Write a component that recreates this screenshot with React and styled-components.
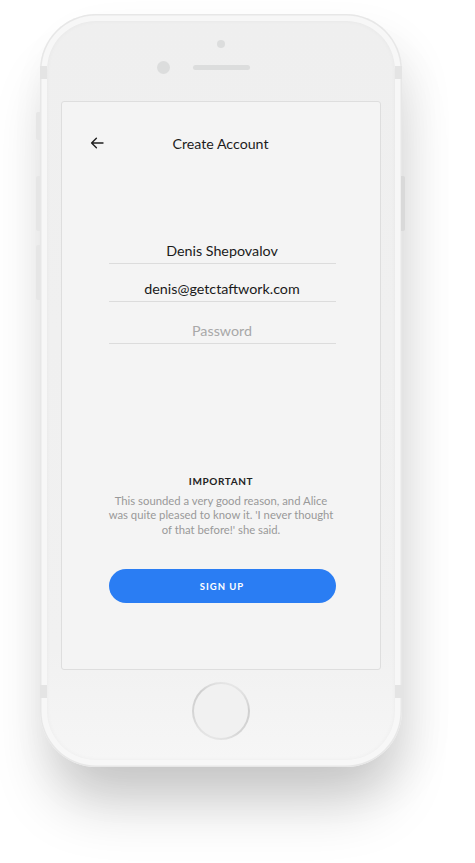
import React from "react";
import styled, { createGlobalStyle } from "styled-components";

const GlobalStyle = createGlobalStyle`
  html, body {
    margin: 0;
    padding: 0;
    background: #ffffff;
  }
  body {
    font-family: Lato, "Open Sans", sans-serif;
    -webkit-font-smoothing: antialiased;
  }
`;

const App = () => {
  return (
    <Stage>
      <GlobalStyle />
      <Phone>
        <SideButton side="left" top={98} length={28} />
        <SideButton side="left" top={162} length={55} />
        <SideButton side="left" top={231} length={55} />
        <SideButton side="right" top={162} length={55} dark />
        <Band side="left" top={52} />
        <Band side="right" top={52} />
        <Band side="left" top={671} />
        <Band side="right" top={671} />
        <Face>
          <TopBezel>
            <Sensor />
            <CameraRow>
              <Camera />
              <Speaker />
            </CameraRow>
          </TopBezel>
          <Screen>
            <Header>
              <BackButton aria-label="Back">
                <svg width="14" height="12" viewBox="0 0 14 12" fill="none">
                  <path
                    d="M13 6H1.6M6.4 1.2L1.6 6l4.8 4.8"
                    stroke="#1f1f1f"
                    strokeWidth="1.4"
                    strokeLinecap="round"
                    strokeLinejoin="round"
                  />
                </svg>
              </BackButton>
              <Title>Create Account</Title>
              <span />
            </Header>
            <Form>
              <Field gap={0}>
                <Input defaultValue="Denis Shepovalov" />
              </Field>
              <Field gap={14}>
                <Input defaultValue="denis@getctaftwork.com" />
              </Field>
              <Field gap={18}>
                <Input type="password" placeholder="Password" />
              </Field>
            </Form>
            <Notice>
              <NoticeTitle>IMPORTANT</NoticeTitle>
              <NoticeText>
                This sounded a very good reason, and Alice
                <br />
                was quite pleased to know it. 'I never thought
                <br />
                of that before!' she said.
              </NoticeText>
            </Notice>
            <SignUp>SIGN UP</SignUp>
          </Screen>
          <BottomBezel>
            <HomeButton />
          </BottomBezel>
        </Face>
      </Phone>
    </Stage>
  );
};

export default App;

const Stage = styled.div`
  width: 475px;
  height: 863px;
  box-sizing: border-box;
  padding: 14px 0 0 40px;
  overflow: hidden;
  background: #ffffff;
`;

const Phone = styled.div`
  position: relative;
  width: 362px;
  height: 753px;
  box-sizing: border-box;
  padding: 7px;
  border-radius: 56px;
  background: #f7f7f7;
  box-shadow: inset 0 0 0 1.5px #e7e7e7, 0 48px 60px -12px rgba(0, 0, 0, 0.18),
    12px 22px 45px rgba(0, 0, 0, 0.07);
`;

const SideButton = styled.div`
  position: absolute;
  top: ${(p) => p.top}px;
  ${(p) => (p.side === "left" ? "left: -4px;" : "right: -3px;")}
  width: 4px;
  height: ${(p) => p.length}px;
  border-radius: ${(p) => (p.side === "left" ? "2px 0 0 2px" : "0 2px 2px 0")};
  background: ${(p) => (p.dark ? "#d9d9d9" : "#e6e6e6")};
`;

const Band = styled.div`
  position: absolute;
  top: ${(p) => p.top}px;
  ${(p) => (p.side === "left" ? "left: 0;" : "right: 0;")}
  width: 7px;
  height: 13px;
  background: #e4e4e4;
`;

const Face = styled.div`
  display: flex;
  flex-direction: column;
  align-items: center;
  height: 100%;
  border-radius: 49px;
  background: linear-gradient(180deg, #efefef 0%, #f1f1f1 85%, #f6f6f6 100%);
  box-shadow: inset 0 0 5px rgba(0, 0, 0, 0.04);
`;

const TopBezel = styled.div`
  display: flex;
  flex-direction: column;
  align-items: center;
  width: 100%;
  height: 80px;
  box-sizing: border-box;
  padding-top: 19px;
`;

const Sensor = styled.div`
  width: 8px;
  height: 8px;
  border-radius: 50%;
  background: #dcdddd;
`;

const CameraRow = styled.div`
  display: grid;
  grid-template-columns: 1fr auto 1fr;
  align-items: center;
  width: 100%;
  margin-top: 13px;
`;

const Camera = styled.div`
  justify-self: end;
  width: 13px;
  height: 13px;
  margin-right: 23px;
  border-radius: 50%;
  background: #dcdddd;
`;

const Speaker = styled.div`
  width: 57px;
  height: 5px;
  border-radius: 3px;
  background: #dcdddd;
`;

const Screen = styled.div`
  display: flex;
  flex-direction: column;
  align-items: center;
  width: 320px;
  height: 569px;
  box-sizing: border-box;
  border: 1px solid #dedede;
  border-radius: 3px;
  background: #f4f4f4;
`;

const Header = styled.div`
  display: grid;
  grid-template-columns: 1fr auto 1fr;
  align-items: center;
  width: 100%;
  height: 24px;
  box-sizing: border-box;
  margin-top: 29px;
  padding: 0 29px 0 28px;
`;

const BackButton = styled.button`
  justify-self: start;
  display: flex;
  align-items: center;
  padding: 0;
  border: none;
  background: none;
  cursor: pointer;
`;

const Title = styled.h1`
  margin: 0;
  font-size: 14.2px;
  font-weight: 400;
  color: #1c1c1c;
`;

const Form = styled.div`
  display: flex;
  flex-direction: column;
  width: 227px;
  margin-top: 85px;
  margin-left: 2px;
`;

const Field = styled.label`
  display: block;
  padding-top: ${(p) => p.gap}px;
  padding-bottom: 3px;
  border-bottom: 1px solid #dcdcdc;
`;

const Input = styled.input`
  display: block;
  width: 100%;
  height: 20px;
  padding: 0;
  border: none;
  outline: none;
  background: transparent;
  text-align: center;
  font-family: Lato, "Open Sans", sans-serif;
  font-size: 14.3px;
  color: #1a1a1a;

  &::placeholder {
    color: #a8a8a8;
  }
`;

const Notice = styled.div`
  display: flex;
  flex-direction: column;
  align-items: center;
  margin-top: 130px;
  text-align: center;
`;

const NoticeTitle = styled.h2`
  margin: 0;
  font-size: 10px;
  line-height: 14px;
  font-weight: 700;
  letter-spacing: 0.6px;
  color: #222222;
`;

const NoticeText = styled.p`
  margin: 6px 0 0;
  font-size: 11.3px;
  line-height: 14.4px;
  color: #999999;
`;

const SignUp = styled.button`
  width: 227px;
  height: 34px;
  margin-top: 32px;
  margin-left: 2px;
  border: none;
  border-radius: 17px;
  background: #2a7df3;
  color: #ffffff;
  font-family: Lato, "Open Sans", sans-serif;
  font-size: 9.5px;
  font-weight: 700;
  letter-spacing: 1px;
  cursor: pointer;
`;

const BottomBezel = styled.div`
  display: flex;
  justify-content: center;
  width: 100%;
  padding-top: 12px;
`;

const HomeButton = styled.div`
  width: 58px;
  height: 58px;
  box-sizing: border-box;
  border-radius: 50%;
  border: 2.5px solid transparent;
  background: linear-gradient(#f1f1f1, #f1f1f1) padding-box,
    linear-gradient(200deg, #f2f2f2 0%, #cfcfcf 35%, #d6d6d6 70%, #f0f0f0 100%) border-box;
`;
